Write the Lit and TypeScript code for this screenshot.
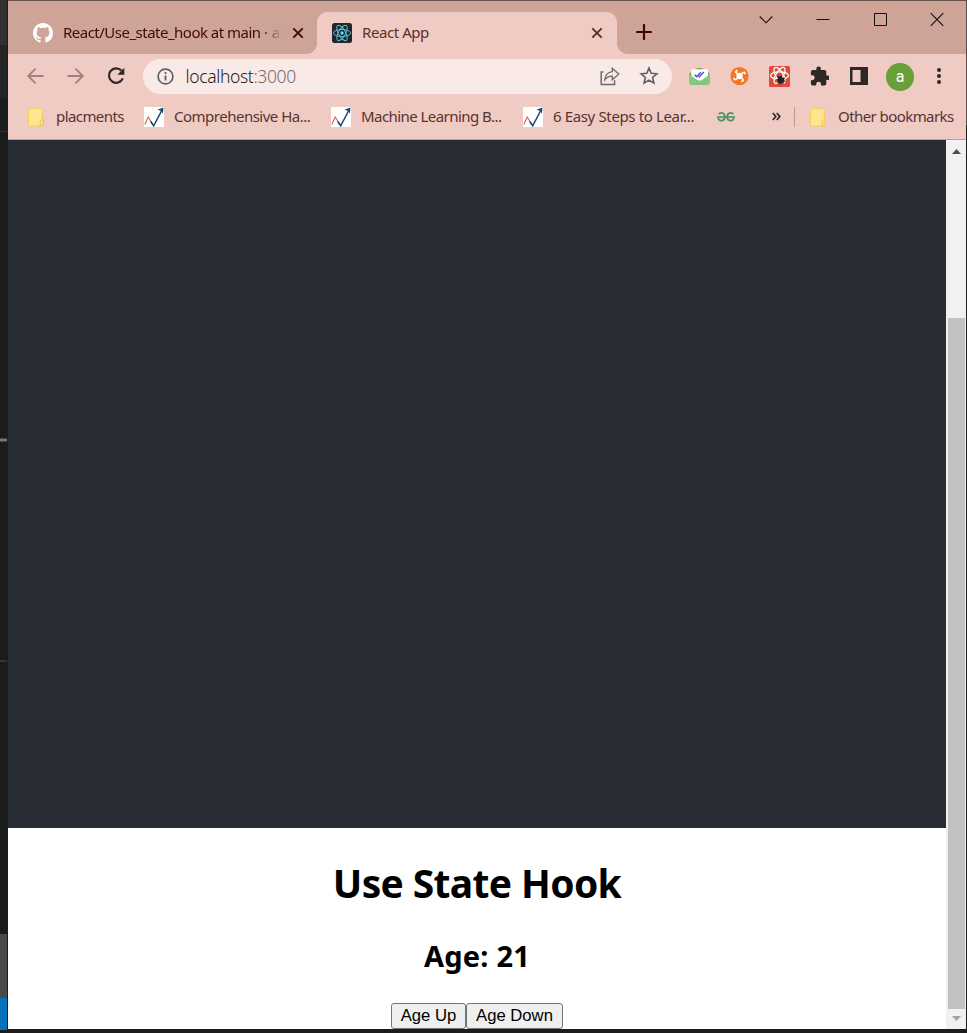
import { LitElement, html, svg, css } from "lit";
import { customElement, state } from "lit/decorators.js";

const closeIcon = html`<svg class="close" width="12" height="12" viewBox="0 0 12 12"><path d="M1.3 1.3 10.7 10.7M10.7 1.3 1.3 10.7" fill="none" stroke="currentColor" stroke-width="1.9"/></svg>`;

const folderIcon = html`<svg width="16" height="19" viewBox="0 0 16 19"><path d="M1.5.7h11.8a1 1 0 0 1 1 1v10h1v5.1a1.2 1.2 0 0 1-1.2 1.2H1.5a1 1 0 0 1-1-1V1.7a1 1 0 0 1 1-1Z" fill="#ffe58d" stroke="#f3cf59" stroke-width=".9"/><path d="M12.2 17.8v-4.3q0-1.6 1.6-1.6h1.5v4.8q0 1.2-1.4 1.2Z" fill="#ffe27b" stroke="#e8bc3a" stroke-width=".8"/></svg>`;

const chartIcon = html`<svg width="20" height="20" viewBox="0 0 20 20"><path d="M0 0h20v20H0z" fill="#fff"/><path d="M.8 17.6 4.2 10l4.5 7.5" fill="none" stroke="#d96c50" stroke-width="1.2"/><path d="m6.7 14.5 3 4.3L18 3" fill="none" stroke="#174a76" stroke-width="1.5"/><path d="m13.6 2.6 5.9-2-.6 6.2-1.4-2.5Z" fill="#174a76"/></svg>`;

const orbits = (color: string, width: number) => svg`<g fill="none" stroke=${color} stroke-width=${width}><ellipse cx="10" cy="10" rx="8.6" ry="3.5"/><ellipse cx="10" cy="10" rx="8.6" ry="3.5" transform="rotate(60 10 10)"/><ellipse cx="10" cy="10" rx="8.6" ry="3.5" transform="rotate(120 10 10)"/></g>`;

@customElement("app-root")
export class AppRoot extends LitElement {
  @state() private age = 21;

  static styles = css`
    :host { display: block; height: 1033px; overflow: hidden; font-family: "Noto Sans", "Open Sans", sans-serif; }
    * { box-sizing: border-box; }
    svg { display: block; flex: none; }
    .desktop { display: grid; grid-template: 1029px 4px / 8px 958px 1px; width: 967px; height: 1033px; background: #1c1c1c; }
    .behind { display: flex; flex-direction: column; width: 7px; height: 1033px; grid-row: 1 / 3; background: #1b1b1b; }
    .b1 { height: 45px; background: #303030; }
    .b2 { height: 53px; background: #252525; }
    .b3 { height: 33px; background: #1d1d1d; }
    .b4 { height: 1px; background: #303030; }
    .b5 { height: 306px; }
    .b6 { height: 4px; background: #777; border-top: 1px solid #444; border-bottom: 1px solid #444; }
    .b7 { height: 218px; }
    .b8 { height: 2px; background: #353535; }
    .b9 { height: 272px; }
    .b10 { height: 64px; background: #494949; }
    .b11 { height: 32px; background: #0672bd; }
    .window { display: flex; flex-direction: column; overflow: hidden; background: #fff; }
    .edge { background: linear-gradient(#5e484a 0 125px, #1e1e20 125px); }
    .tabs { height: 54px; flex: none; background: #cea498; border-top: 1px solid #65504e; display: flex; align-items: flex-start; color: #430909; }
    .tab { height: 42px; margin-top: 11px; display: flex; align-items: center; }
    .tab.idle { width: 309px; padding-left: 25px; }
    .tab.active { width: 300px; padding: 0 14px 0 15px; background: #efcbc3; border-radius: 10px 10px 0 0; position: relative; color: #582f2b; }
    .tab.active::before, .tab.active::after { content: ""; position: absolute; bottom: 0; width: 10px; height: 10px; }
    .tab.active::before { right: 100%; background: radial-gradient(circle at 0 0, transparent 9.5px, #efcbc3 10px); }
    .tab.active::after { left: 100%; background: radial-gradient(circle at 100% 0, transparent 9.5px, #efcbc3 10px); }
    .title { font-size: 15px; line-height: 22px; white-space: nowrap; margin: 0 0 2px 10px; }
    .idle .title { width: 221px; letter-spacing: -.51px; -webkit-mask-image: linear-gradient(90deg, #000 200px, transparent 219px); mask-image: linear-gradient(90deg, #000 200px, transparent 219px); }
    .faded { margin-left: 1px; }
    .idle .close { margin-left: 8px; }
    .active .title { flex: 1; letter-spacing: -.43px; }
    .plus { margin: 23px 0 0 19px; }
    .controls { margin: 11px 22px 0 auto; display: flex; gap: 43px; color: #111; }
    .toolbar { height: 45px; flex: none; background: #efcbc3; display: flex; align-items: center; padding-left: 18px; }
    .nav { display: flex; gap: 20px; margin-bottom: 1px; }
    .address { width: 529px; height: 35px; border-radius: 18px; background: #f9eae8; margin-left: 17px; padding: 0 13px 1px; display: flex; align-items: center; }
    .url { font-size: 17.5px; line-height: 24px; letter-spacing: -.36px; margin-left: 10.5px; flex: 1; color: #211d1d; font-weight: 350; }
    .port { color: #756b6b; }
    .star { margin-left: 19px; }
    .extensions { display: flex; align-items: center; gap: 20px; margin: 0 0 1px 17px; }
    .avatar { width: 28px; height: 28px; border-radius: 50%; background: #689f38; color: #fff; font: 16px/27px Roboto, sans-serif; text-align: center; margin: 1px -5px 0 -3px; }
    .bookmarks { height: 41px; flex: none; background: #efcbc3; border-bottom: 1px solid #bd9c98; display: flex; align-items: center; padding: 0 0 5px 20px; color: #573331; font-size: 15px; line-height: 22px; white-space: nowrap; }
    .bookmark { display: flex; align-items: center; gap: 11px; }
    .bookmark svg { margin-top: 1px; }
    .bookmark span { margin-bottom: 2px; }
    .w1 { width: 116px; letter-spacing: -.58px; gap: 12px; }
    .w2 { width: 187px; gap: 10px; letter-spacing: -.5px; }
    .w3 { width: 192px; gap: 10px; letter-spacing: -.56px; }
    .w4 { width: 194px; gap: 10px; letter-spacing: -.36px; }
    .more { margin-left: 37px; }
    .divider { width: 1px; height: 20px; background: #b99b97; margin: 0 15px 0 13px; }
    .other { letter-spacing: -.57px; gap: 12px; }
    .viewport { flex: 1; display: flex; min-height: 0; }
    .page { width: 938px; display: flex; flex-direction: column; text-align: center; color: #000; overflow: hidden; }
    .hero { height: 688px; flex: none; background: #282c34; }
    h1 { font-size: 39px; line-height: 54px; margin: 28px 0 0; letter-spacing: -.65px; }
    h2 { font-size: 29px; line-height: 40px; margin: 26px 0 0; letter-spacing: .2px; }
    .actions { display: flex; justify-content: center; margin: 27px 0 0; }
    .action { height: 26px; padding: 0; border: 1px solid #767676; border-radius: 3px; background: #efefef; font: 16.67px/22px "Liberation Sans", Arial, sans-serif; color: #000; flex: none; }
    .up { width: 75px; }
    .down { width: 97px; }
    .scroll { width: 20px; background: #f1f1f1; display: flex; flex-direction: column; align-items: center; }
    .arrow { margin: 9px 0 0 1px; }
    .thumb { width: 17px; height: 691px; background: #c1c1c1; margin: 164px 0 0 1px; flex: none; }
    .arrow.bottom { margin-top: 7px; }
  `;

  render() {
    return html`<div class="desktop">
      <div class="behind"><i class="b1"></i><i class="b2"></i><i class="b3"></i><i class="b4"></i><i class="b5"></i><i class="b6"></i><i class="b7"></i><i class="b8"></i><i class="b9"></i><i class="b10"></i><i class="b11"></i></div>
      <div class="window">
        <div class="tabs">
          <div class="tab idle">
            <svg width="20" height="20" viewBox="0 0 16 16"><path fill="#fff" d="M8 0C3.58 0 0 3.58 0 8c0 3.54 2.29 6.53 5.47 7.59.4.07.55-.17.55-.38 0-.19-.01-.82-.01-1.49-2.01.37-2.53-.49-2.69-.94-.09-.23-.48-.94-.82-1.13-.28-.15-.68-.52-.01-.53.63-.01 1.08.58 1.23.82.72 1.21 1.87.87 2.33.66.07-.52.28-.87.51-1.07-1.78-.2-3.64-.89-3.64-3.95 0-.87.31-1.59.82-2.15-.08-.2-.36-1.02.08-2.12 0 0 .67-.21 2.2.82A7.65 7.65 0 0 1 8 3.86c.68 0 1.36.09 2 .27 1.53-1.04 2.2-.82 2.2-.82.44 1.1.16 1.92.08 2.12.51.56.82 1.27.82 2.15 0 3.07-1.87 3.75-3.65 3.95.29.25.54.73.54 1.48 0 1.07-.01 1.93-.01 2.2 0 .21.15.46.55.38A8 8 0 0 0 16 8c0-4.42-3.58-8-8-8Z"/></svg>
            <span class="title">React/Use_state_hook at main ·<span class="faded"> al</span></span>${closeIcon}
          </div>
          <div class="tab active">
            <svg width="20" height="20" viewBox="0 0 20 20"><rect width="20" height="20" rx="2.5" fill="#222529"/>${orbits("#53bed5", 1)}<circle cx="10" cy="10" r="1.7" fill="#61dafb"/></svg>
            <span class="title">React App</span>${closeIcon}
          </div>
          <svg class="plus" width="16" height="16" viewBox="0 0 16 16"><path d="M8 1v14M1 8h14" stroke="#430909" stroke-width="2.2" stroke-linecap="round"/></svg>
          <div class="controls">
            <svg width="14" height="15" viewBox="0 0 14 15"><path d="m.7 4.5 6.3 6.3 6.3-6.3" fill="none" stroke="currentColor" stroke-width="1.1"/></svg>
            <svg width="14" height="15" viewBox="0 0 14 15"><path d="M.5 7.5h13" stroke="currentColor"/></svg>
            <svg width="14" height="15" viewBox="0 0 14 15"><path d="M1.5 1.5h12v12h-12z" fill="none" stroke="currentColor"/></svg>
            <svg width="14" height="15" viewBox="0 0 14 15"><path d="m.7 1.2 12.6 12.6m0-12.6L.7 13.8" stroke="currentColor" stroke-width="1.1"/></svg>
          </div>
        </div>
        <div class="toolbar">
          <div class="nav">
            <svg width="20" height="20" viewBox="0 0 20 20"><path d="M17.5 10H2.7M9.5 2.7 2.2 10l7.3 7.3" fill="none" stroke="#9c8280" stroke-width="1.8"/></svg>
            <svg width="20" height="20" viewBox="0 0 20 20"><path d="M1.5 10h14.8M9.5 2.7l7.3 7.3-7.3 7.3" fill="none" stroke="#9c8280" stroke-width="1.8"/></svg>
            <svg width="20" height="20" viewBox="0 0 20 20"><path d="M15.4 4.6A7.2 7.2 0 1 0 16.8 12.4" fill="none" stroke="#2e2828" stroke-width="2.2"/><path d="M18.3 1.7v7h-7Z" fill="#2e2828"/></svg>
          </div>
          <div class="address">
            <svg width="19" height="19" viewBox="0 0 19 19"><circle cx="9.5" cy="9.5" r="7.4" fill="none" stroke="#5f6065" stroke-width="1.7"/><path d="M9.5 8.4v5M9.5 5.1v1.9" stroke="#5f6065" stroke-width="1.8"/></svg>
            <span class="url">localhost<span class="port">:3000</span></span>
            <svg width="20" height="19" viewBox="0 0 20 19"><path d="M3.5 5H1.2v12.5h13.4v-4.2" fill="none" stroke="#6d696a" stroke-width="1.5"/><path d="M12.3 4.7V1.3L18.8 7l-6.5 5.7V9.2C9.2 9.1 6.6 10.4 4.8 13c.3-4.7 3-7.7 7.5-8.3Z" fill="none" stroke="#6d696a" stroke-width="1.3"/></svg>
            <svg class="star" width="20" height="20" viewBox="0 0 20 20"><path d="m10 2 2.2 5.3 5.7.5-4.3 3.7 1.3 5.6-4.9-3-4.9 3 1.3-5.6-4.3-3.7 5.7-.5Z" fill="none" stroke="#5f6065" stroke-width="1.6"/></svg>
          </div>
          <div class="extensions">
            <svg width="21" height="20" viewBox="0 0 21 20"><path d="M.5 7.2 8.5 2h4l8 5.2v9.6a2 2 0 0 1-2 2h-16a2 2 0 0 1-2-2Z" fill="#57ad65"/><path d="M2.2 3.2h16.8v8l-8.4 4-8.4-4Z" fill="#fff"/><path d="m.5 8.6 7.3 5.2q2.7 1.8 5.4 0l7.3-5.2v8.2q0 1.9-2 1.9h-16q-2 0-2-1.9Z" fill="#81cb80"/><path d="m5.7 8.7 2 2 4.2-4.5M9.5 10.2l.8.6 4.6-4.8" fill="none" stroke="#5145d4" stroke-width="1.3"/></svg>
            <svg width="19" height="20" viewBox="0 0 20 20"><circle cx="10" cy="10" r="9.6" fill="#f77624"/><circle cx="10" cy="10" r="3.3" fill="#fff"/><path d="m7.8 7.8-2-2M12.2 7.8l2-2M7.8 12.2l-2 2M12.2 12.2l2 2" stroke="#fff" stroke-width="1.6"/><path d="M5.5 5.7 8 3.9M12 16.1l2.5-1.8M14.4 5.5l1.8 2.5M3.8 12l1.8 2.5" fill="none" stroke="#fff" stroke-width="1.8"/></svg>
            <svg width="21" height="21" viewBox="0 0 20 20"><rect width="20" height="20" rx="1.5" fill="#df4c3b"/><g transform="translate(0 -1)">${orbits("#fff", 1.2)}</g><path d="m8 9 2.2 1.1 2-1.1.2 2 3.1.5-1.3 1.3 1.4 2.4-2-.5.5 2.8-1.8-1-1 1.7-1.1-2-2.5.4 1-2-2.1-1.4 2-1Z" fill="#262120"/></svg>
            <svg width="19" height="20" viewBox="1 1 21 21"><path d="M20.5 11H19V7a2 2 0 0 0-2-2h-4V3.5a2.5 2.5 0 0 0-5 0V5H4a2 2 0 0 0-2 2v3.8h1.5a2.7 2.7 0 0 1 0 5.4H2V20a2 2 0 0 0 2 2h3.8v-1.5a2.7 2.7 0 0 1 5.4 0V22H17a2 2 0 0 0 2-2v-4h1.5a2.5 2.5 0 0 0 0-5Z" fill="#2e2828"/></svg>
            <svg width="20" height="20" viewBox="0 0 20 20"><path d="M1 1h18v18H1z" fill="#2e2828"/><path d="M3.5 4h8v12h-8z" fill="#efcbc3"/></svg>
            <div class="avatar">a</div>
            <svg width="20" height="20" viewBox="0 0 20 20"><g fill="#2e2828"><circle cx="10" cy="4" r="2"/><circle cx="10" cy="10" r="2"/><circle cx="10" cy="16" r="2"/></g></svg>
          </div>
        </div>
        <div class="bookmarks">
          <div class="bookmark w1">${folderIcon}<span>placments</span></div>
          <div class="bookmark w2">${chartIcon}<span>Comprehensive Ha...</span></div>
          <div class="bookmark w3">${chartIcon}<span>Machine Learning B...</span></div>
          <div class="bookmark w4">${chartIcon}<span>6 Easy Steps to Lear...</span></div>
          <svg width="18" height="12" viewBox="0 0 18 12"><path d="M1.8 3C3 1.3 7.7 1 7.8 5.8c0 5-6 4.9-6.5 1.2M16.2 3c-1.2-1.7-5.9-2-6 2.8 0 5 6 4.9 6.5 1.2M0 6h18" fill="none" stroke="#46935b" stroke-width="1.7"/></svg>
          <svg class="more" width="9" height="9" viewBox="0 0 9 9"><path d="m.8 1 3 3.5-3 3.5m4-7 3 3.5-3 3.5" fill="none" stroke="#2e2828" stroke-width="1.7"/></svg>
          <i class="divider"></i>
          <div class="bookmark other">${folderIcon}<span>Other bookmarks</span></div>
        </div>
        <div class="viewport">
          <div class="page">
            <div class="hero"></div>
            <h1>Use State Hook</h1>
            <h2>Age: ${this.age}</h2>
            <div class="actions"><button class="action up" @click=${() => this.age++}>Age Up</button><button class="action down" @click=${() => this.age--}>Age Down</button></div>
          </div>
          <div class="scroll">
            <svg class="arrow" width="9" height="5" viewBox="0 0 9 5"><path d="M4.5 0 9 5H0Z" fill="#505050"/></svg>
            <div class="thumb"></div>
            <svg class="arrow bottom" width="9" height="5" viewBox="0 0 9 5"><path d="M0 0h9L4.5 5Z" fill="#a3a3a3"/></svg>
          </div>
        </div>
      </div>
      <div class="edge"></div>
    </div>`;
  }
}
